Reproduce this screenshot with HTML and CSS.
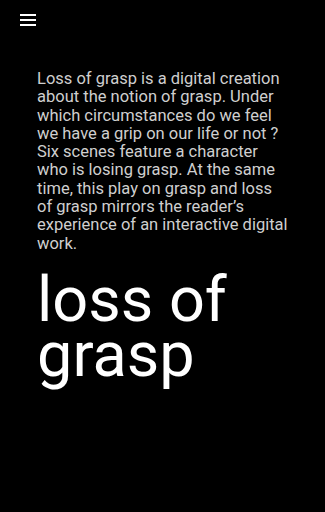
FILE: index.html
```html
<!DOCTYPE html>
<html lang="en">
<head>
<meta charset="utf-8">
<title>loss of grasp</title>
<link rel="stylesheet" href="styles.css">
</head>
<body>
<header class="topbar">
  <button class="menu" aria-label="Menu">
    <svg width="16" height="12" viewBox="0 0 16 12"><rect x="0" y="0" width="16" height="2" fill="#fff"/><rect x="0" y="5" width="16" height="2" fill="#fff"/><rect x="0" y="10" width="16" height="2" fill="#fff"/></svg>
  </button>
</header>
<main class="content">
  <p class="intro">Loss of grasp is a digital creation about the notion of grasp. Under which circumstances do we feel we have a grip on our life or not ? Six scenes feature a character who is losing grasp. At the same time, this play on grasp and loss of grasp mirrors the reader’s experience of an interactive digital work.</p>
  <h1 class="title">loss of grasp</h1>
</main>
</body>
</html>
```
FILE: styles.css
```css
html, body {
  margin: 0;
  padding: 0;
  background: #000;
  height: 100%;
}
body {
  font-family: Roboto, "Liberation Sans", sans-serif;
  color: #fff;
}
.topbar {
  padding: 14px 0 0 20px;
  height: 46px;
  box-sizing: border-box;
}
.menu {
  display: block;
  margin: 0;
  padding: 0;
  border: 0;
  background: none;
  line-height: 0;
}
.content {
  padding: 0 37px;
}
.intro {
  margin: 24px 0 0;
  font-size: 16.5px;
  line-height: 18.3px;
  color: #cfcfcf;
}
.title {
  margin: 19px 0 0;
  font-size: 63px;
  line-height: 55px;
  font-weight: 400;
  color: #fff;
}
```
